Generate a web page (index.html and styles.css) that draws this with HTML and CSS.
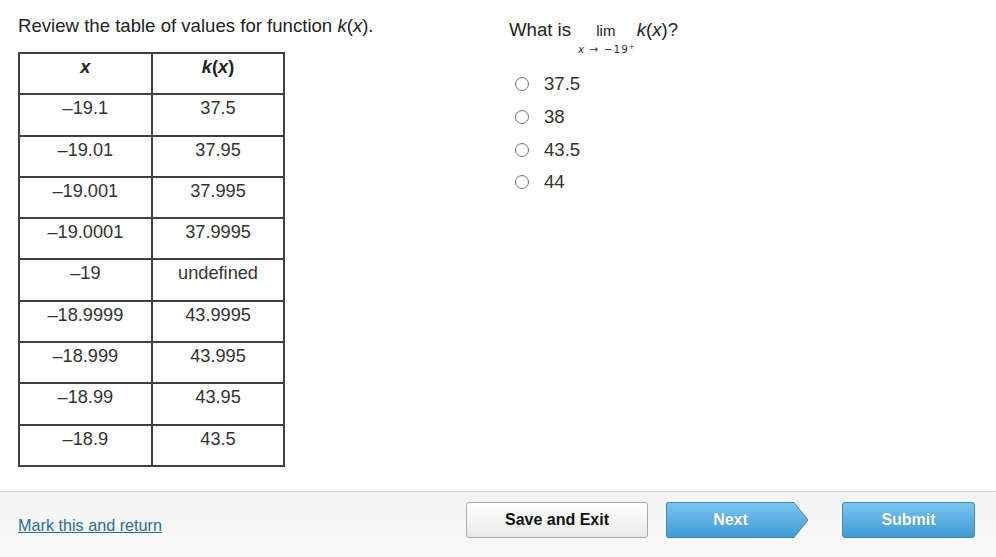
FILE: index.html
```html
<!DOCTYPE html>
<html>
<head>
<meta charset="utf-8">
<link rel="stylesheet" href="styles.css">
</head>
<body>
<div class="page">
  <main class="content">
    <section class="left">
      <p class="prompt">Review the table of values for function <i>k</i>(<i>x</i>).</p>
      <table class="values">
        <tr><th><i>x</i></th><th><i>k</i>(<i>x</i>)</th></tr>
        <tr><td>–19.1</td><td>37.5</td></tr>
        <tr><td>–19.01</td><td>37.95</td></tr>
        <tr><td>–19.001</td><td>37.995</td></tr>
        <tr><td>–19.0001</td><td>37.9995</td></tr>
        <tr><td>–19</td><td>undefined</td></tr>
        <tr><td>–18.9999</td><td>43.9995</td></tr>
        <tr><td>–18.999</td><td>43.995</td></tr>
        <tr><td>–18.99</td><td>43.95</td></tr>
        <tr><td>–18.9</td><td>43.5</td></tr>
      </table>
    </section>
    <section class="right">
      <div class="question">
        <span>What is</span>
        <span class="lim"><span class="lim-word">lim</span><span class="lim-sub"><i>x</i> → −19<sup>+</sup></span></span>
        <span><i>k</i>(<i>x</i>)?</span>
      </div>
      <ul class="options">
        <li><span class="radio"></span>37.5</li>
        <li><span class="radio"></span>38</li>
        <li><span class="radio"></span>43.5</li>
        <li><span class="radio"></span>44</li>
      </ul>
    </section>
  </main>
  <footer class="footer">
    <a class="mark" href="#">Mark this and return</a>
    <div class="buttons">
      <button class="btn save">Save and Exit</button>
      <button class="btn next">Next<svg class="arrow" width="16" height="36" viewBox="0 0 16 36"><defs><linearGradient id="ng" x1="0" y1="0" x2="0" y2="1"><stop offset="0" stop-color="#7cc4ef"/><stop offset="1" stop-color="#3f9bd6"/></linearGradient></defs><path d="M0 0.5 L1 0.5 L15 18 L1 35.5 L0 35.5 Z" fill="url(#ng)" stroke="#3a86bd" stroke-width="1"/><rect x="0" y="1" width="1.5" height="34" fill="url(#ng)"/></svg></button>
      <button class="btn submit">Submit</button>
    </div>
  </footer>
</div>
</body>
</html>
```
FILE: styles.css
```css
html, body {
  margin: 0;
  padding: 0;
  background: #fff;
}
body {
  font-family: "Liberation Sans", Arial, sans-serif;
  color: #222;
  width: 996px;
  height: 557px;
  overflow: hidden;
}
.page {
  display: flex;
  flex-direction: column;
  height: 557px;
}
.content {
  display: flex;
  height: 491px;
}
.left {
  width: 491px;
  padding-left: 18px;
  box-sizing: border-box;
}
.prompt {
  margin: 15px 0 0 0;
  font-size: 18.6px;
  line-height: 21px;
  color: #222;
}
.values {
  margin-top: 16px;
  border-collapse: collapse;
  font-size: 18.2px;
}
.values th, .values td {
  border: 2px solid #404040;
  width: 130.7px;
  height: 36.3px;
  padding: 0;
  text-align: center;
  vertical-align: top;
  line-height: 20px;
  padding-top: 3px;
  color: #333;
}
.values th {
  padding-top: 3px;
  font-weight: bold;
  color: #222;
}
.values td {
  font-weight: normal;
}
.right {
  padding-left: 18px;
}
.question {
  display: flex;
  align-items: flex-start;
  margin-top: 19px;
  font-size: 18.6px;
  line-height: 22px;
  color: #222;
}
.lim {
  display: inline-flex;
  flex-direction: column;
  align-items: center;
  margin: 0 1px 0 3px;
}
.lim-word {
  font-size: 15px;
  line-height: 24px;
  padding-left: 2px;
}
.lim-sub {
  font-family: "DejaVu Sans", sans-serif;
  font-size: 10.5px;
  line-height: 10px;
  letter-spacing: 1px;
  margin-top: -1px;
  padding-left: 4px;
  color: #333;
}
.lim-sub sup {
  font-size: 7px;
  vertical-align: 4px;
}
.options {
  list-style: none;
  margin: 14px 0 0 6px;
  padding: 0;
  font-size: 18.6px;
}
.options li {
  display: flex;
  align-items: center;
  height: 32.7px;
  color: #333;
}
.radio {
  width: 12px;
  height: 12px;
  border: 1px solid #777;
  border-radius: 50%;
  margin-right: 15px;
  background: #fff;
  box-shadow: inset 0 1px 1px rgba(0,0,0,0.08);
}
.footer {
  border-top: 1px solid #d8d8d8;
  background: linear-gradient(#f3f3f3, #fafafa);
  flex: 1;
  display: flex;
  align-items: flex-start;
  justify-content: space-between;
  padding: 0 21px 0 18px;
}
.mark {
  margin-top: 24px;
  font-size: 16.2px;
  color: #2c6d97;
  text-decoration: underline;
}
.buttons {
  display: flex;
  align-items: flex-start;
  margin-top: 10px;
}
.btn {
  height: 36px;
  font-family: "Liberation Sans", Arial, sans-serif;
  font-size: 16px;
  font-weight: bold;
  border-radius: 3px;
  padding: 0;
  cursor: pointer;
}
.save {
  width: 182px;
  background: linear-gradient(#ffffff, #e9e9e9);
  border: 1px solid #a9a9a9;
  color: #111;
}
.next {
  position: relative;
  width: 128px;
  margin-left: 18px;
  background: linear-gradient(#7cc4ef, #3f9bd6);
  border: 1px solid #3a86bd;
  border-right: none;
  border-radius: 3px 0 0 3px;
  color: #fff;
  text-shadow: 0 0 1px rgba(0,0,0,0.25);
  padding-left: 0;
}
.arrow {
  position: absolute;
  top: -1px;
  right: -15px;
}
.submit {
  width: 133px;
  margin-left: 48px;
  background: linear-gradient(#7cc4ef, #3f9bd6);
  border: 1px solid #3a86bd;
  color: #fff;
  text-shadow: 0 0 1px rgba(0,0,0,0.25);
}
```
